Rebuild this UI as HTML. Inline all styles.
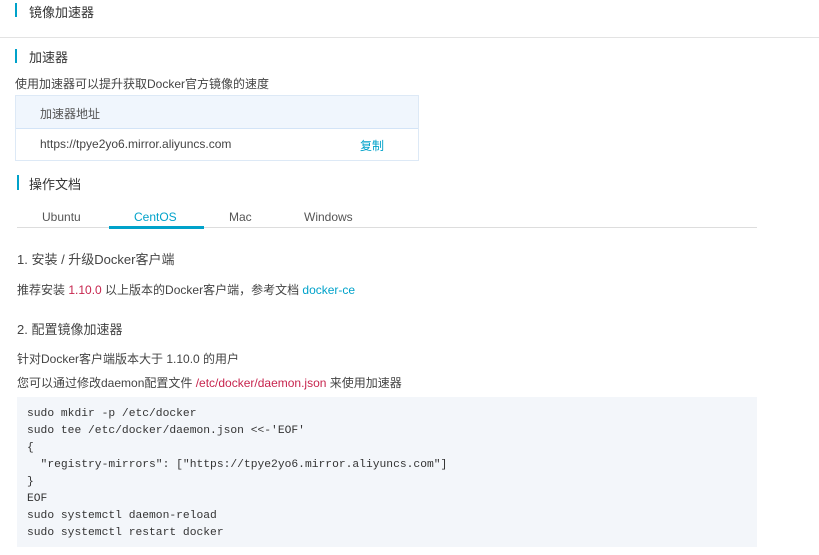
<!DOCTYPE html><html><head><meta charset="utf-8"><style>
*{margin:0;padding:0;box-sizing:border-box}
body{width:819px;height:555px;background:#fff;font-family:"Liberation Sans","Noto Sans CJK SC",sans-serif;color:#333;font-size:12px;position:relative;overflow:hidden}
.a{position:absolute;white-space:nowrap}
.bar{position:absolute;width:2px;background:#00a2ca}
</style></head><body>
<div class="bar" style="left:15px;top:3px;height:14px"></div>
<div class="a" style="left:29px;top:2px;font-size:13px">镜像加速器</div>
<div class="a" style="left:0;top:37px;width:819px;height:1px;background:#e3e3e3"></div>
<div class="bar" style="left:15px;top:49px;height:14px"></div>
<div class="a" style="left:29px;top:47px;font-size:13px">加速器</div>
<div class="a" style="left:15px;top:75px;color:#444">使用加速器可以提升获取Docker官方镜像的速度</div>
<div class="a" style="left:15px;top:95px;width:404px;height:66px;border:1px solid #dde9f6">
<div style="height:33px;background:#f0f6fd;border-bottom:1px solid #d3e4f7;padding:9px 0 0 24px;color:#555">加速器地址</div>
<div style="padding:8px 0 0 24px;color:#444">https://tpye2yo6.mirror.aliyuncs.com<span style="position:absolute;left:344px;top:41px;color:#00a2ca">复制</span></div>
</div>
<div class="bar" style="left:17px;top:175px;height:15px"></div>
<div class="a" style="left:29px;top:174px;font-size:13px">操作文档</div>
<div class="a" style="left:42px;top:210px;color:#555">Ubuntu</div>
<div class="a" style="left:134px;top:210px;color:#00a2ca">CentOS</div>
<div class="a" style="left:229px;top:210px;color:#555">Mac</div>
<div class="a" style="left:304px;top:210px;color:#555">Windows</div>
<div class="a" style="left:17px;top:227px;width:740px;height:1px;background:#ddd"></div>
<div class="a" style="left:109px;top:226px;width:95px;height:3px;background:#00a2ca"></div>
<div class="a" style="left:17px;top:249px;font-size:13px;color:#444">1. 安装 / 升级Docker客户端</div>
<div class="a" style="left:17px;top:281px;color:#444">推荐安装 <span style="color:#c7254e">1.10.0</span> 以上版本的Docker客户端，参考文档 <span style="color:#00a2ca">docker-ce</span></div>
<div class="a" style="left:17px;top:319px;font-size:13px;color:#444">2. 配置镜像加速器</div>
<div class="a" style="left:17px;top:350px;color:#444">针对Docker客户端版本大于 1.10.0 的用户</div>
<div class="a" style="left:17px;top:374px;color:#444">您可以通过修改daemon配置文件 <span style="color:#c7254e">/etc/docker/daemon.json</span> 来使用加速器</div>
<pre class="a" style="white-space:pre;left:17px;top:397px;width:740px;height:150px;background:#f3f6fa;padding:9px 0 0 10px;font-family:'Liberation Mono',monospace;font-size:11.3px;line-height:17px;color:#333">sudo mkdir -p /etc/docker
sudo tee /etc/docker/daemon.json &lt;&lt;-'EOF'
{
  "registry-mirrors": ["https://tpye2yo6.mirror.aliyuncs.com"]
}
EOF
sudo systemctl daemon-reload
sudo systemctl restart docker</pre>
</body></html>
